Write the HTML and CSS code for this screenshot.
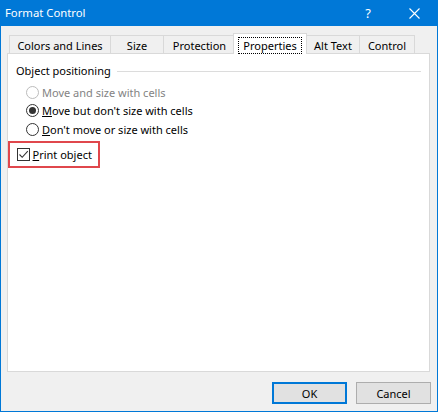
FILE: index.html
```html
<!DOCTYPE html>
<html>
<head>
<meta charset="utf-8">
<link rel="stylesheet" href="styles.css">
</head>
<body>
<div class="window">
  <div class="titlebar">
    <span class="title">Format Control</span>
    <div class="tb-btns">
      <span class="tb-btn help">?</span>
      <span class="tb-btn close">
        <svg width="11" height="11" viewBox="0 0 11 11"><path d="M0.5 0.5 L10.5 10.5 M10.5 0.5 L0.5 10.5" stroke="#fff" stroke-width="1.1" fill="none"/></svg>
      </span>
    </div>
  </div>
  <div class="body">
    <div class="tabs">
      <div class="tab t-colors">Colors and Lines</div>
      <div class="tab t-size">Size</div>
      <div class="tab t-prot">Protection</div>
      <div class="tab t-props selected"><span class="focus">Properties</span></div>
      <div class="tab t-alt">Alt Text</div>
      <div class="tab t-ctrl">Control</div>
    </div>
    <div class="panel">
      <div class="group-head"><span class="legend">Object positioning</span><span class="rule"></span></div>
      <div class="radios">
        <div class="opt disabled"><span class="radio"></span><span>Move and size with cells</span></div>
        <div class="opt"><span class="radio checked"><span class="dot"></span></span><span><u>M</u>ove but don't size with cells</span></div>
        <div class="opt"><span class="radio"></span><span><u>D</u>on't move or size with cells</span></div>
      </div>
      <div class="highlight">
        <span class="check"><svg width="11" height="11" viewBox="0 0 11 11"><path d="M1.5 5.5 L4.2 8.3 L9.8 2.2" stroke="#333" stroke-width="1.1" fill="none"/></svg></span>
        <span><u>P</u>rint object</span>
      </div>
    </div>
    <div class="buttons">
      <button class="btn default">OK</button>
      <button class="btn">Cancel</button>
    </div>
  </div>
</div>
</body>
</html>
```

FILE: styles.css
```css
html, body {
  margin: 0;
  padding: 0;
}
body {
  width: 438px;
  height: 412px;
  overflow: hidden;
  font-family: "Noto Sans", "Open Sans", "Liberation Sans", sans-serif;
  font-size: 11px;
  color: #000;
}
.window {
  box-sizing: border-box;
  width: 438px;
  height: 412px;
  border: 1px solid #0078d7;
  border-top: 0;
  background: #f0f0f0;
  display: flex;
  flex-direction: column;
}
.titlebar {
  height: 26px;
  flex: none;
  background: #0078d7;
  color: #fff;
  display: flex;
  align-items: center;
}
.title {
  padding-left: 4px;
  font-size: 11.3px;
  line-height: 16px;
}
.tb-btns {
  margin-left: auto;
  display: flex;
}
.tb-btn {
  width: 46px;
  height: 26px;
  display: flex;
  align-items: center;
  justify-content: center;
}
.help {
  font-size: 13px;
  line-height: 16px;
}
.close svg {
  display: block;
}
.body {
  flex: 1;
  display: flex;
  flex-direction: column;
  padding: 7px 7px 0 6px;
}
.tabs {
  display: flex;
  align-items: flex-end;
  height: 20px;
  padding-left: 2px;
}
.tab {
  box-sizing: border-box;
  height: 18px;
  border: 1px solid #d9d9d9;
  border-bottom: 0;
  margin-right: -1px;
  display: flex;
  align-items: center;
  justify-content: center;
  line-height: 15px;
  padding-top: 1px;
  background: #f0f0f0;
}
.t-colors { width: 102px; }
.t-size { width: 54px; }
.t-prot { width: 73px; }
.t-props { width: 74px; }
.t-alt { width: 54px; }
.t-ctrl { width: 56px; }
.tab.selected {
  height: 21px;
  margin-left: -2px;
  margin-bottom: -1px;
  background: #fff;
  position: relative;
  z-index: 1;
  padding-top: 1px;
  align-items: flex-start;
}
.focus {
  box-sizing: border-box;
  width: 64px;
  height: 17px;
  margin-top: 2px;
  border: 1px dotted #000;
  display: flex;
  align-items: center;
  justify-content: center;
  line-height: 15px;
}
.panel {
  box-sizing: border-box;
  height: 319px;
  flex: none;
  background: #fff;
  border: 1px solid #d9d9d9;
  padding-top: 9px;
}
.group-head {
  display: flex;
  align-items: center;
  height: 16px;
  line-height: 16px;
  margin: 0 8px 0 8px;
}
.rule {
  flex: 1;
  border-top: 1px solid #dcdcdc;
  margin-left: 6px;
}
.radios {
  margin-top: 4px;
}
.opt {
  display: flex;
  align-items: center;
  height: 18.5px;
  padding-left: 18px;
  line-height: 15px;
}
.radio {
  box-sizing: border-box;
  width: 13px;
  height: 13px;
  border: 1px solid #333;
  border-radius: 50%;
  margin-right: 3px;
  display: flex;
  align-items: center;
  justify-content: center;
  flex: none;
}
.dot {
  width: 7px;
  height: 7px;
  border-radius: 50%;
  background: #333;
}
.opt.disabled {
  color: #838383;
}
.opt.disabled .radio {
  border-color: #bcbcbc;
}
.highlight {
  box-sizing: border-box;
  width: 92px;
  height: 27px;
  margin-top: 2.5px;
  border: 2.5px solid #e0474c;
  display: flex;
  align-items: center;
  padding-left: 6.5px;
  line-height: 15px;
}
.check {
  box-sizing: border-box;
  width: 13px;
  height: 13px;
  border: 1px solid #333;
  margin-right: 3px;
  display: flex;
  align-items: center;
  justify-content: center;
  flex: none;
}
.check svg {
  display: block;
}
.buttons {
  display: flex;
  justify-content: flex-end;
  gap: 9px;
  margin-top: 10px;
  margin-right: -1px;
}
.btn {
  box-sizing: border-box;
  width: 75px;
  height: 22px;
  margin: 0;
  padding: 0;
  background: #e1e1e1;
  border: 1px solid #adadad;
  font-family: "Noto Sans", "Open Sans", "Liberation Sans", sans-serif;
  font-size: 11px;
  color: #000;
  line-height: 15px;
}
.btn.default {
  border: 2px solid #0078d7;
}
```
